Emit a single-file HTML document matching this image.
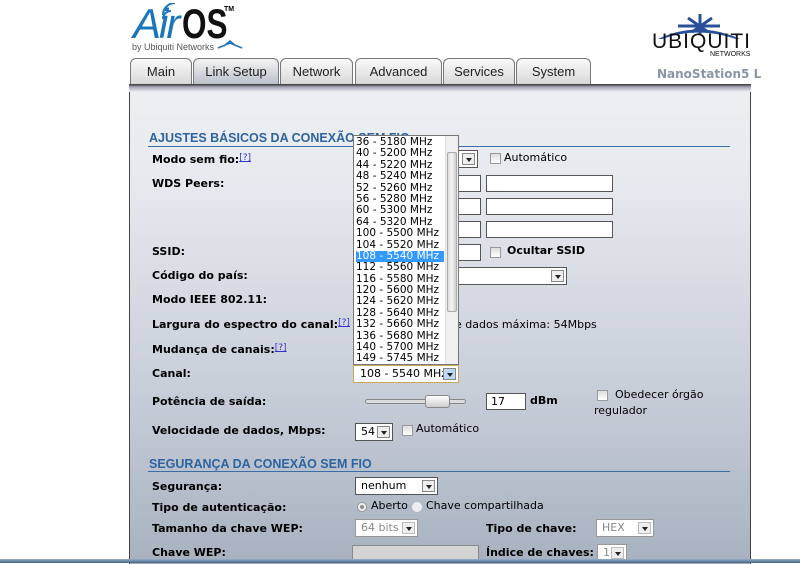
<!DOCTYPE html>
<html><head><meta charset="utf-8"><style>
*{margin:0;padding:0;box-sizing:border-box}
body{width:800px;height:563px;background:#fff;position:relative;overflow:hidden;font-family:"DejaVu Sans","Liberation Sans",sans-serif;font-size:11px;color:#000}
.a{position:absolute;white-space:nowrap}
.tab{position:absolute;top:58px;height:26px;border:1px solid #777;border-bottom:none;border-radius:6px 6px 0 0;background:linear-gradient(#fafafa,#d8d8d8);font:13px "Liberation Sans",sans-serif;color:#222;text-align:center;line-height:26px}
.tab.on{background:linear-gradient(#f4f4f4,#b9bfc8);height:27px}
.lbl{position:absolute;left:152px;font-weight:bold;font-size:11px;white-space:nowrap}
.h{position:absolute;left:149px;font:bold 12.5px "Liberation Sans",sans-serif;color:#2d64a0}
.hl{position:absolute;left:148px;width:582px;height:1px;background:#3c6ea6}
.q{color:#3333cc;text-decoration:underline;font-weight:normal;font-size:9px;vertical-align:top}
.in{position:absolute;height:17px;background:#fff;border:1px solid #555}
.sel{position:absolute;height:18px;background:#fff;border:1px solid #555;font-size:11px;line-height:16px;padding-left:5px}
.arr{position:absolute;right:2px;top:2px;width:13px;height:12px;border:1px solid #888;background:#eee}
.arr:after{content:"";position:absolute;left:3px;top:4px;border-left:3px solid transparent;border-right:3px solid transparent;border-top:4px solid #222}
.cb{position:absolute;width:11px;height:11px;border:1px solid #999;background:linear-gradient(#ddd,#fff)}
.dis{color:#888;border-color:#999}
.lst div{height:11.4px}
</style></head><body>
<div class="a" style="left:133px;top:0px;font:italic 42px 'Liberation Sans',sans-serif;color:#1b75bb;letter-spacing:-2px">Air</div>
<div class="a" style="left:182px;top:0px;font:bold 42px 'Liberation Sans',sans-serif;color:#111;transform:scaleX(.75);transform-origin:left">OS</div>
<div class="a" style="left:224px;top:6px;font:bold 7px 'Liberation Sans',sans-serif">TM</div>
<svg class="a" style="left:160px;top:3px" width="20" height="18"><path d="M3 16a8 8 0 0 1 8-8M3 12a12 12 0 0 1 12-12" stroke="#1b75bb" stroke-width="2" fill="none"/></svg>
<div class="a" style="left:132px;top:42px;font:9px 'Liberation Sans',sans-serif;color:#555">by Ubiquiti Networks</div>
<svg class="a" style="left:217px;top:40px" width="26" height="10"><path d="M1 8L13 3L25 8M7 6L13 1L19 6" stroke="#1b75bb" stroke-width="1.5" fill="none"/></svg>
<svg class="a" style="left:648px;top:12px" width="100" height="28"><path d="M10 27Q50 8 92 27L88 27Q50 14 14 27Z" fill="#2a4f9a"/><path d="M52 2L52 22M40 6L60 20M64 6L44 20M30 14L72 14" stroke="#2a4f9a" stroke-width="3"/></svg>
<div class="a" style="left:652px;top:30px;font:21px 'Liberation Sans',sans-serif;color:#111;letter-spacing:1px">UBIQUITI</div>
<div class="a" style="left:710px;top:51px;font:7px 'Liberation Sans',sans-serif;color:#111">NETWORKS</div>
<div class="a" style="left:657px;top:67px;font:bold 12px 'DejaVu Sans',sans-serif;color:#8a96a8">NanoStation5 L</div>
<div class="tab" style="left:130px;width:62px">Main</div>
<div class="tab on" style="left:193px;width:86px">Link Setup</div>
<div class="tab" style="left:280px;width:73px">Network</div>
<div class="tab" style="left:355px;width:87px">Advanced</div>
<div class="tab" style="left:443px;width:72px">Services</div>
<div class="tab" style="left:516px;width:75px">System</div>
<div class="a" style="left:129px;top:84px;width:622px;height:480px;background:linear-gradient(#eef0f3 0px,#e6e9ee 100px,#c9cfd9 300px,#a8b1c0 480px);border-left:1px solid #444;border-right:1px solid #444"></div>
<div class="a" style="left:129px;top:84px;width:622px;height:8px;background:linear-gradient(#333,#aab 40%,#eef0f3)"></div>
<div class="h" style="top:131px">AJUSTES BÁSICOS DA CONEXÃO SEM FIO</div>
<div class="hl" style="top:146px"></div>
<div class="lbl" style="top:153px">Modo sem fio:<span class="q">[?]</span></div>
<div class="lbl" style="top:177px">WDS Peers:</div>
<div class="lbl" style="top:245px">SSID:</div>
<div class="lbl" style="top:269px">Código do país:</div>
<div class="lbl" style="top:293px">Modo IEEE 802.11:</div>
<div class="lbl" style="top:318px">Largura do espectro do canal:<span class="q">[?]</span></div>
<div class="lbl" style="top:343px">Mudança de canais:<span class="q">[?]</span></div>
<div class="lbl" style="top:367px">Canal:</div>
<div class="lbl" style="top:395px">Potência de saída:</div>
<div class="lbl" style="top:424px">Velocidade de dados, Mbps:</div>
<div class="sel" style="left:353px;top:150px;width:125px"><div class="arr"></div></div>
<div class="cb" style="left:490px;top:153px"></div><div class="a" style="left:504px;top:151px">Automático</div>
<div class="in" style="left:353px;top:175px;width:128px"></div><div class="in" style="left:486px;top:175px;width:127px"></div>
<div class="in" style="left:353px;top:198px;width:128px"></div><div class="in" style="left:486px;top:198px;width:127px"></div>
<div class="in" style="left:353px;top:221px;width:128px"></div><div class="in" style="left:486px;top:221px;width:127px"></div>
<div class="in" style="left:353px;top:244px;width:128px"></div>
<div class="cb" style="left:490px;top:247px"></div><div class="a" style="left:507px;top:244px;font-weight:bold">Ocultar SSID</div>
<div class="sel" style="left:353px;top:267px;width:214px"><div class="arr"></div></div>
<div class="a" style="left:455px;top:318px">e dados máxima: 54Mbps</div>
<div class="a lst" style="left:353px;top:135px;width:106px;height:230px;background:#fff;border:1px solid #777;font-size:10.5px;line-height:11.4px;padding:1px 0 0 2px;overflow:hidden">
<div>36 - 5180 MHz</div><div>40 - 5200 MHz</div><div>44 - 5220 MHz</div><div>48 - 5240 MHz</div><div>52 - 5260 MHz</div><div>56 - 5280 MHz</div><div>60 - 5300 MHz</div><div>64 - 5320 MHz</div><div>100 - 5500 MHz</div><div>104 - 5520 MHz</div><div style="background:#3399ff;color:#fff;margin-right:14px">108 - 5540 MHz</div><div>112 - 5560 MHz</div><div>116 - 5580 MHz</div><div>120 - 5600 MHz</div><div>124 - 5620 MHz</div><div>128 - 5640 MHz</div><div>132 - 5660 MHz</div><div>136 - 5680 MHz</div><div>140 - 5700 MHz</div><div>149 - 5745 MHz</div>
<div class="a" style="right:0;top:0;width:13px;height:228px;background:#f0f0f0;border-left:1px solid #ddd"><div style="position:absolute;left:1px;top:16px;width:10px;height:160px;background:linear-gradient(90deg,#ddd,#f4f4f4,#ccc);border:1px solid #aaa;border-radius:2px"></div></div>
</div>
<div class="sel" style="left:353px;top:365px;width:106px;border:1px solid #c9a855;padding-left:6px">108 - 5540 MHz<div class="arr" style="background:#bcd8f4"></div></div>
<div class="a" style="left:365px;top:399px;width:101px;height:5px;border:1px solid #888;border-radius:3px;background:#ddd"></div>
<div class="a" style="left:425px;top:395px;width:25px;height:13px;border:1px solid #888;border-radius:3px;background:linear-gradient(#fff,#ccc)"></div>
<div class="in" style="left:486px;top:393px;width:40px;padding-left:4px;line-height:15px">17</div>
<div class="a" style="left:530px;top:394px;font-weight:bold">dBm</div>
<div class="cb" style="left:597px;top:390px"></div><div class="a" style="left:615px;top:388px">Obedecer órgão</div>
<div class="a" style="left:594px;top:404px">regulador</div>
<div class="sel" style="left:355px;top:423px;width:38px">54<div class="arr"></div></div>
<div class="cb" style="left:402px;top:425px"></div><div class="a" style="left:416px;top:422px">Automático</div>
<div class="h" style="top:457px">SEGURANÇA DA CONEXÃO SEM FIO</div>
<div class="hl" style="top:471px"></div>
<div class="lbl" style="top:480px">Segurança:</div>
<div class="lbl" style="top:501px">Tipo de autenticação:</div>
<div class="lbl" style="top:522px">Tamanho da chave WEP:</div>
<div class="lbl" style="top:546px">Chave WEP:</div>
<div class="sel" style="left:355px;top:477px;width:83px">nenhum<div class="arr"></div></div>
<div class="a" style="left:357px;top:502px;width:10px;height:10px;border:1px solid #999;border-radius:50%;background:radial-gradient(#888 30%,#eee 40%)"></div>
<div class="a" style="left:371px;top:499px">Aberto</div>
<div class="a" style="left:412px;top:502px;width:10px;height:10px;border-radius:50%;background:#eee"></div>
<div class="a" style="left:426px;top:499px">Chave compartilhada</div>
<div class="sel dis" style="left:355px;top:519px;width:63px">64 bits<div class="arr" style="border-color:#bbb"></div></div>
<div class="a" style="left:486px;top:522px;font-weight:bold">Tipo de chave:</div>
<div class="sel dis" style="left:596px;top:519px;width:58px">HEX<div class="arr" style="border-color:#bbb"></div></div>
<div class="a" style="left:352px;top:545px;width:127px;height:18px;background:#d4d4d4;border:1px solid #888"></div>
<div class="a" style="left:486px;top:546px;font-weight:bold">Índice de chaves:</div>
<div class="sel dis" style="left:597px;top:544px;width:30px">1<div class="arr" style="border-color:#bbb"></div></div>
<div class="a" style="left:0;top:559px;width:800px;height:4px;background:linear-gradient(#9ab0c8,#3f6287)"></div>
</body></html>
